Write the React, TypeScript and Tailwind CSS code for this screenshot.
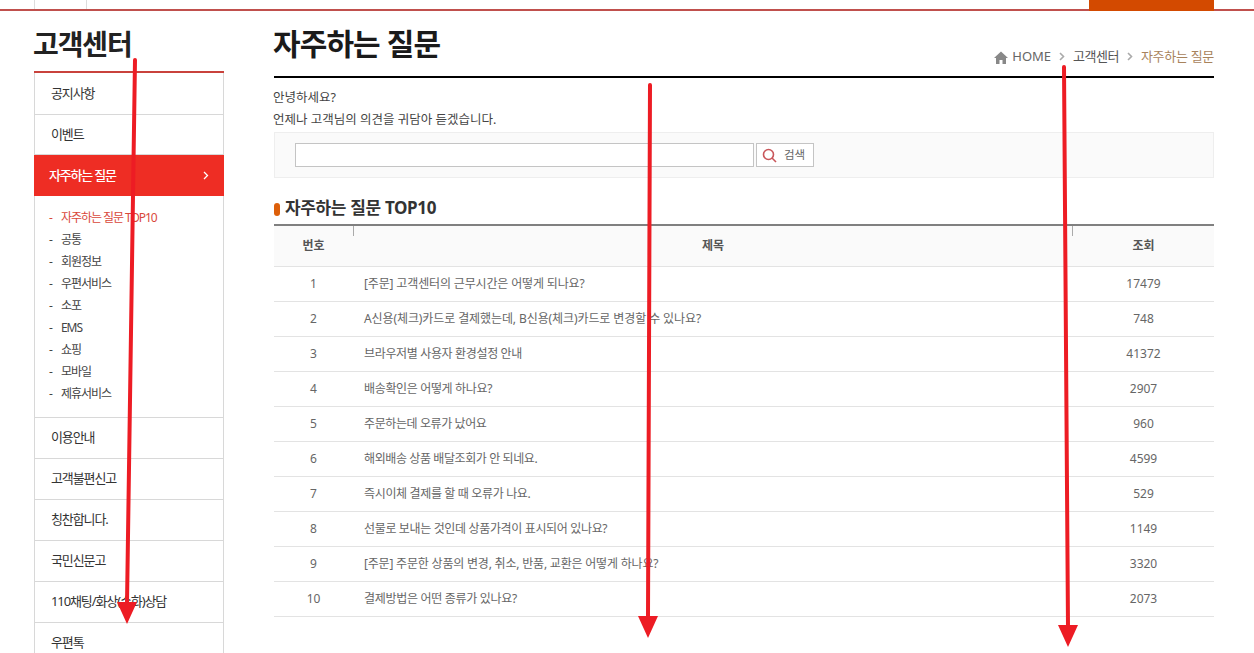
import React from "react";

const font = { fontFamily: '"Noto Sans", "Noto Sans CJK KR", sans-serif' };

const bottomMenu = ["이용안내", "고객불편신고", "칭찬합니다.", "국민신문고", "110채팅/화상(수화)상담", "우편톡"];
const sub = ["공통", "회원정보", "우편서비스", "소포", "EMS", "쇼핑", "모바일", "제휴서비스"];
const rows: [string, string, string][] = [
  ["[주문] 고객센터의 근무시간은 어떻게 되나요?", "17479", "tracking-[-0.15px]"],
  ["A신용(체크)카드로 결제했는데, B신용(체크)카드로 변경할 수 있나요?", "748", "tracking-[-0.1px]"],
  ["브라우저별 사용자 환경설정 안내", "41372", "tracking-[-0.35px]"],
  ["배송확인은 어떻게 하나요?", "2907", "tracking-[-0.35px]"],
  ["주문하는데 오류가 났어요", "960", "tracking-[-0.4px]"],
  ["해외배송 상품 배달조회가 안 되네요.", "4599", "tracking-[-0.4px]"],
  ["즉시이체 결제를 할 때 오류가 나요.", "529", "tracking-[-0.35px]"],
  ["선물로 보내는 것인데 상품가격이 표시되어 있나요?", "1149", "tracking-[-0.35px]"],
  ["[주문] 주문한 상품의 변경, 취소, 반품, 교환은 어떻게 하나요?", "3320", "tracking-[-0.2px]"],
  ["결제방법은 어떤 종류가 있나요?", "2073", "tracking-[-0.3px]"],
];

function MenuItem({ label, h = "h-[41px]" }: { label: string; h?: string }) {
  return (
    <div className={`${h} flex items-center pl-4 border-b border-[#d8d8d8] text-[13px] tracking-[-1.1px] text-[#333]`}>
      {label}
    </div>
  );
}

function Chevron() {
  return (
    <svg width="6" height="9" viewBox="0 0 6 9" className="mx-[8px]">
      <path d="M1 1l3.5 3.5L1 8" fill="none" stroke="#aaa" strokeWidth="1.6" />
    </svg>
  );
}

function Arrow({ x1, y1, x2, y2 }: { x1: number; y1: number; x2: number; y2: number }) {
  return (
    <g>
      <line x1={x1} y1={y1} x2={x2} y2={y2 - 20} stroke="#ed1c24" strokeWidth="4" strokeLinecap="round" />
      <polygon points={`${x2 - 10},${y2 - 22} ${x2 + 10},${y2 - 22} ${x2},${y2}`} fill="#ed1c24" />
    </g>
  );
}

export default function App() {
  return (
    <div className="relative w-[1254px] h-[653px] overflow-hidden bg-white" style={font}>
      <div className="h-[11px] border-b-2 border-[#c0504d] flex justify-between pl-[34px] pr-10">
        <div className="w-[53px] h-[9px] border-x border-[#ddd]" />
        <div className="w-[125px] h-[11px] bg-[#d34a00]" />
      </div>

      <div className="flex pl-[34px] gap-[50px] items-start">
        <aside className="w-[190px] shrink-0">
          <div className="h-[62px] flex items-center pt-[6px] border-b-2 border-[#c9423c] text-[28px] font-bold leading-none tracking-[-1.1px] text-[#222]">
            <span className="-ml-px">고객센터</span>
          </div>
          <div className="border-x border-[#d8d8d8]">
            <MenuItem label="공지사항" h="h-[42px]" />
            <MenuItem label="이벤트" h="h-[40px]" />
            <div className="-mx-px h-[41px] bg-[#ee2d24] flex items-center justify-between pl-[15px] pr-[15px] text-white text-[13px] font-medium tracking-[-1.2px]">
              <span>자주하는 질문</span>
              <svg width="6" height="9" viewBox="0 0 6 9">
                <path d="M1 1l3.5 3.5L1 8" fill="none" stroke="#fff" strokeWidth="1.3" />
              </svg>
            </div>
            <ul className="pt-[11px] pb-[12px] border-b border-[#d8d8d8] text-[12px] tracking-[-1.05px] text-[#444]">
              <li className="h-[22px] flex items-center pl-[14px] text-[#d9483b]">
                <span className="w-[12px]">-</span>자주하는 질문 TOP10
              </li>
              {sub.map((s) => (
                <li key={s} className="h-[22px] flex items-center pl-[14px]">
                  <span className="w-[12px]">-</span>
                  {s}
                </li>
              ))}
            </ul>
            {bottomMenu.map((m) => (
              <MenuItem key={m} label={m} />
            ))}
          </div>
        </aside>

        <main className="w-[940px] shrink-0">
          <div className="h-[67px] flex justify-between border-b-2 border-black">
            <h1 className="-ml-px pt-[13px] text-[30px] font-bold leading-[40px] tracking-[-0.9px] text-[#1a1a1a]">자주하는 질문</h1>
            <div className="self-end pb-[10px] flex items-center text-[13px] text-[#666]">
              <svg width="14" height="13" viewBox="0 0 14 13" className="mr-[4px] mt-[2px]">
                <path d="M7 0.5L0 7h2v6h3.5V9h3v4H12V7h2z" fill="#888" />
              </svg>
              <span>HOME</span>
              <Chevron />
              <span className="tracking-[-0.5px] text-[#555]">고객센터</span>
              <Chevron />
              <span className="tracking-[-0.3px] text-[#a8835c]">자주하는 질문</span>
            </div>
          </div>

          <div className="-ml-px pt-[9px] text-[12.5px] leading-[22px] text-[#444]">
            <p>안녕하세요?</p>
            <p>언제나 고객님의 의견을 귀담아 듣겠습니다.</p>
          </div>

          <div className="mt-px h-[46px] bg-[#fafafa] border border-[#eee] flex items-center pl-5 gap-[2px]">
            <div className="w-[459px] h-[24px] bg-white border border-[#c4c4c4]" />
            <div className="w-[58px] h-[24px] bg-white border border-[#c4c4c4] flex items-center pl-[5px] gap-[7px] text-[11.5px] text-[#666]">
              <svg width="15" height="15" viewBox="0 0 15 15">
                <circle cx="6.5" cy="6.5" r="5" fill="none" stroke="#c9565a" strokeWidth="1.6" />
                <path d="M10 10l4 4" stroke="#c9565a" strokeWidth="1.6" />
              </svg>
              검색
            </div>
          </div>

          <div className="mt-[19px] h-[27px] flex items-center pb-[5px]">
            <span className="w-[6px] h-[13px] rounded-full bg-[#dd5f0a] mr-[5px] mt-[2px]" />
            <h2 className="text-[17px] font-bold tracking-[-0.35px] text-[#333]">자주하는 질문 TOP10</h2>
          </div>

          <div className="border-t-2 border-[#808080]">
            <div className="h-[41px] bg-[#fafafa] border-b border-[#e3e3e3] flex text-[12px] font-semibold text-[#555]">
              <div className="w-[79px] flex items-center justify-center">번호</div>
              <div className="relative flex-1 flex items-center justify-center">
                <span className="absolute left-0 top-0 w-px h-[10px] bg-[#aaa]" />
                <span className="absolute right-0 top-0 w-px h-[10px] bg-[#aaa]" />
                제목
              </div>
              <div className="w-[141px] flex items-center justify-center">조회</div>
            </div>
            {rows.map(([t, c, k], i) => (
              <div key={i} className="h-[35px] border-b border-[#e3e3e3] flex items-center text-[12px] text-[#666]">
                <div className="w-[79px] text-center">{i + 1}</div>
                <div className={`flex-1 pl-[11px] ${k}`}>{t}</div>
                <div className="w-[141px] text-center">{c}</div>
              </div>
            ))}
          </div>
        </main>
      </div>

      <svg className="absolute left-0 top-0 pointer-events-none" width="1254" height="653">
        <Arrow x1={135} y1={60} x2={127} y2={624} />
        <Arrow x1={650} y1={85} x2={648} y2={638} />
        <Arrow x1={1064} y1={67} x2={1068} y2={647} />
      </svg>
    </div>
  );
}
